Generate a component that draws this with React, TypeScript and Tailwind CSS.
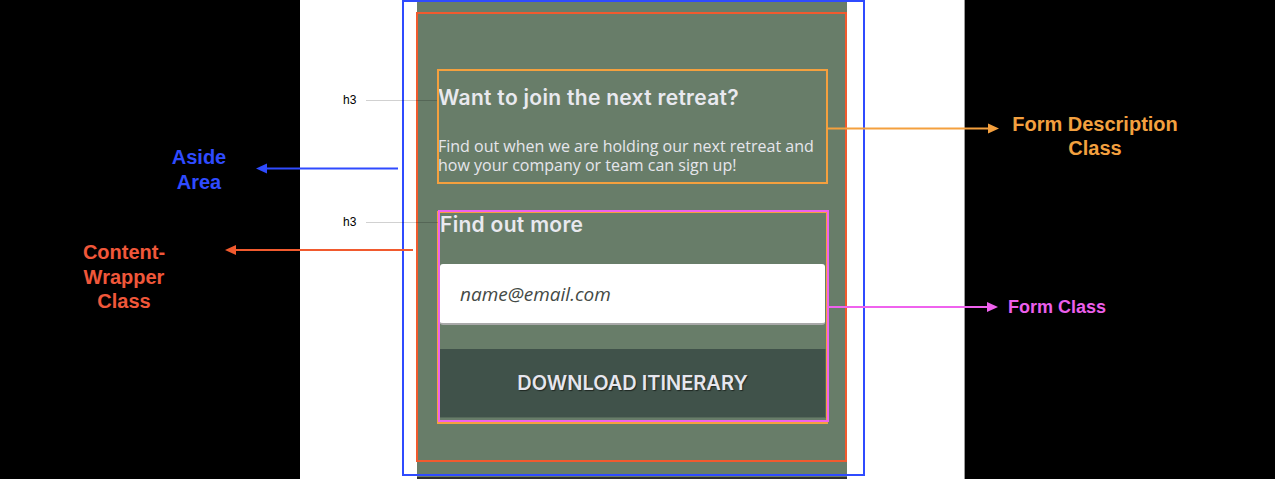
import React from "react";

const heading = "text-[21px] leading-[28px] font-semibold tracking-[0.3px] text-[#e9e9ef] [font-family:Inter,'Noto_Sans',sans-serif]";

export default function App() {
  return (
    <div className="relative w-[1275px] h-[479px] bg-black overflow-hidden flex">
      <div className="w-[300px] shrink-0" />
      <div className="w-[665px] shrink-0 bg-white border-r border-[#9a9a9a] flex pl-[117px]">
        <aside className="w-[430px] h-full flex flex-col">
          <div className="flex-1 bg-[#687d69] flex flex-col pt-[84px] pl-[21px]">
            <div className="w-[388px] flex flex-col">
              <h3 className={heading}>Want to join the next retreat?</h3>
              <p className="mt-[25px] text-[16px] leading-[19px] text-[#e6e6ec] [font-family:'Open_Sans',sans-serif]">
                Find out when we are holding our next retreat and how your company or team can sign up!
              </p>
              <form className="mt-[36px] pl-[2px] flex flex-col" onSubmit={(e) => e.preventDefault()}>
                <h3 className={heading}>Find out more</h3>
                <input
                  type="email"
                  placeholder="name@email.com"
                  className="mt-[25px] h-[61px] w-[385px] bg-white rounded-[3px] border-b-2 border-[#a9a9a9] pl-[20px] text-[19px] outline-none [font-family:'Open_Sans',sans-serif] placeholder:italic placeholder:text-[#444a46]"
                />
                <button
                  type="submit"
                  className="mt-[24px] h-[69px] w-[386px] bg-[#40524a] border-r border-b border-[#566a5b] text-[20px] font-semibold text-[#e6e6ee] [font-family:Inter,'Noto_Sans',sans-serif] [text-shadow:1px_1px_1px_#1e2722]"
                >
                  DOWNLOAD ITINERARY
                </button>
              </form>
            </div>
          </div>
          <div className="h-[2px] bg-[#2e2e2e]" />
        </aside>
      </div>

      {/* annotation boxes */}
      <div className="absolute left-[402px] top-0 w-[463px] h-[476px] border-2 border-[#2f4bff] pointer-events-none" />
      <div className="absolute left-[416px] top-[12px] w-[431px] h-[450px] border-2 border-[#f15a2e] pointer-events-none" />
      <div className="absolute left-[437px] top-[69px] w-[391px] h-[115px] border-2 border-[#f4a03e] pointer-events-none" />
      <div className="absolute left-[437px] top-[211px] w-[391px] h-[213px] border-2 border-[#f4a03e] pointer-events-none" />
      <div className="absolute left-[438px] top-[210px] w-[391px] h-[212px] border-2 border-[#ef62ee] pointer-events-none" />

      {/* arrows and leader lines */}
      <svg className="absolute inset-0 pointer-events-none" width="1275" height="479" viewBox="0 0 1275 479">
        <line x1="366" y1="100.5" x2="437" y2="100.5" stroke="rgba(0,0,0,0.18)" strokeWidth="1" />
        <line x1="366" y1="222.5" x2="438" y2="222.5" stroke="rgba(0,0,0,0.18)" strokeWidth="1" />
        <line x1="264" y1="168.5" x2="398" y2="168.5" stroke="#2f4bff" strokeWidth="2" />
        <polygon points="256,168.5 267,163.5 267,173.5" fill="#2f4bff" />
        <line x1="233" y1="250" x2="413" y2="250" stroke="#f15a2e" strokeWidth="2" />
        <polygon points="225,250 236,245 236,255" fill="#f15a2e" />
        <line x1="828" y1="128.5" x2="991" y2="128.5" stroke="#f4a03e" strokeWidth="2" />
        <polygon points="999,128.5 988,123.5 988,133.5" fill="#f4a03e" />
        <line x1="828" y1="307" x2="990" y2="307" stroke="#ef62ee" strokeWidth="2" />
        <polygon points="998,307 987,302 987,312" fill="#ef62ee" />
      </svg>

      {/* labels */}
      <span className="absolute left-[343px] top-[93px] text-[12px] leading-[14px] text-black [font-family:'Liberation_Sans',sans-serif]">h3</span>
      <span className="absolute left-[343px] top-[215px] text-[12px] leading-[14px] text-black [font-family:'Liberation_Sans',sans-serif]">h3</span>
      <div className="absolute left-[149px] top-[145px] w-[100px] text-center text-[20px] leading-[24.5px] font-bold text-[#2f4bff] [font-family:'Liberation_Sans',sans-serif]">
        Aside<br />Area
      </div>
      <div className="absolute left-[64px] top-[240px] w-[120px] text-center text-[20px] leading-[24.5px] font-bold text-[#f0573a] [font-family:'Liberation_Sans',sans-serif]">
        Content-<br />Wrapper<br />Class
      </div>
      <div className="absolute left-[995px] top-[111.5px] w-[200px] text-center text-[20px] leading-[24.5px] font-bold text-[#f3a03f] [font-family:'Liberation_Sans',sans-serif]">
        Form Description<br />Class
      </div>
      <div className="absolute left-[1008px] top-[296px] text-[18px] leading-[22px] font-bold text-[#ec5fec] [font-family:'Liberation_Sans',sans-serif] whitespace-nowrap">
        Form Class
      </div>
    </div>
  );
}
